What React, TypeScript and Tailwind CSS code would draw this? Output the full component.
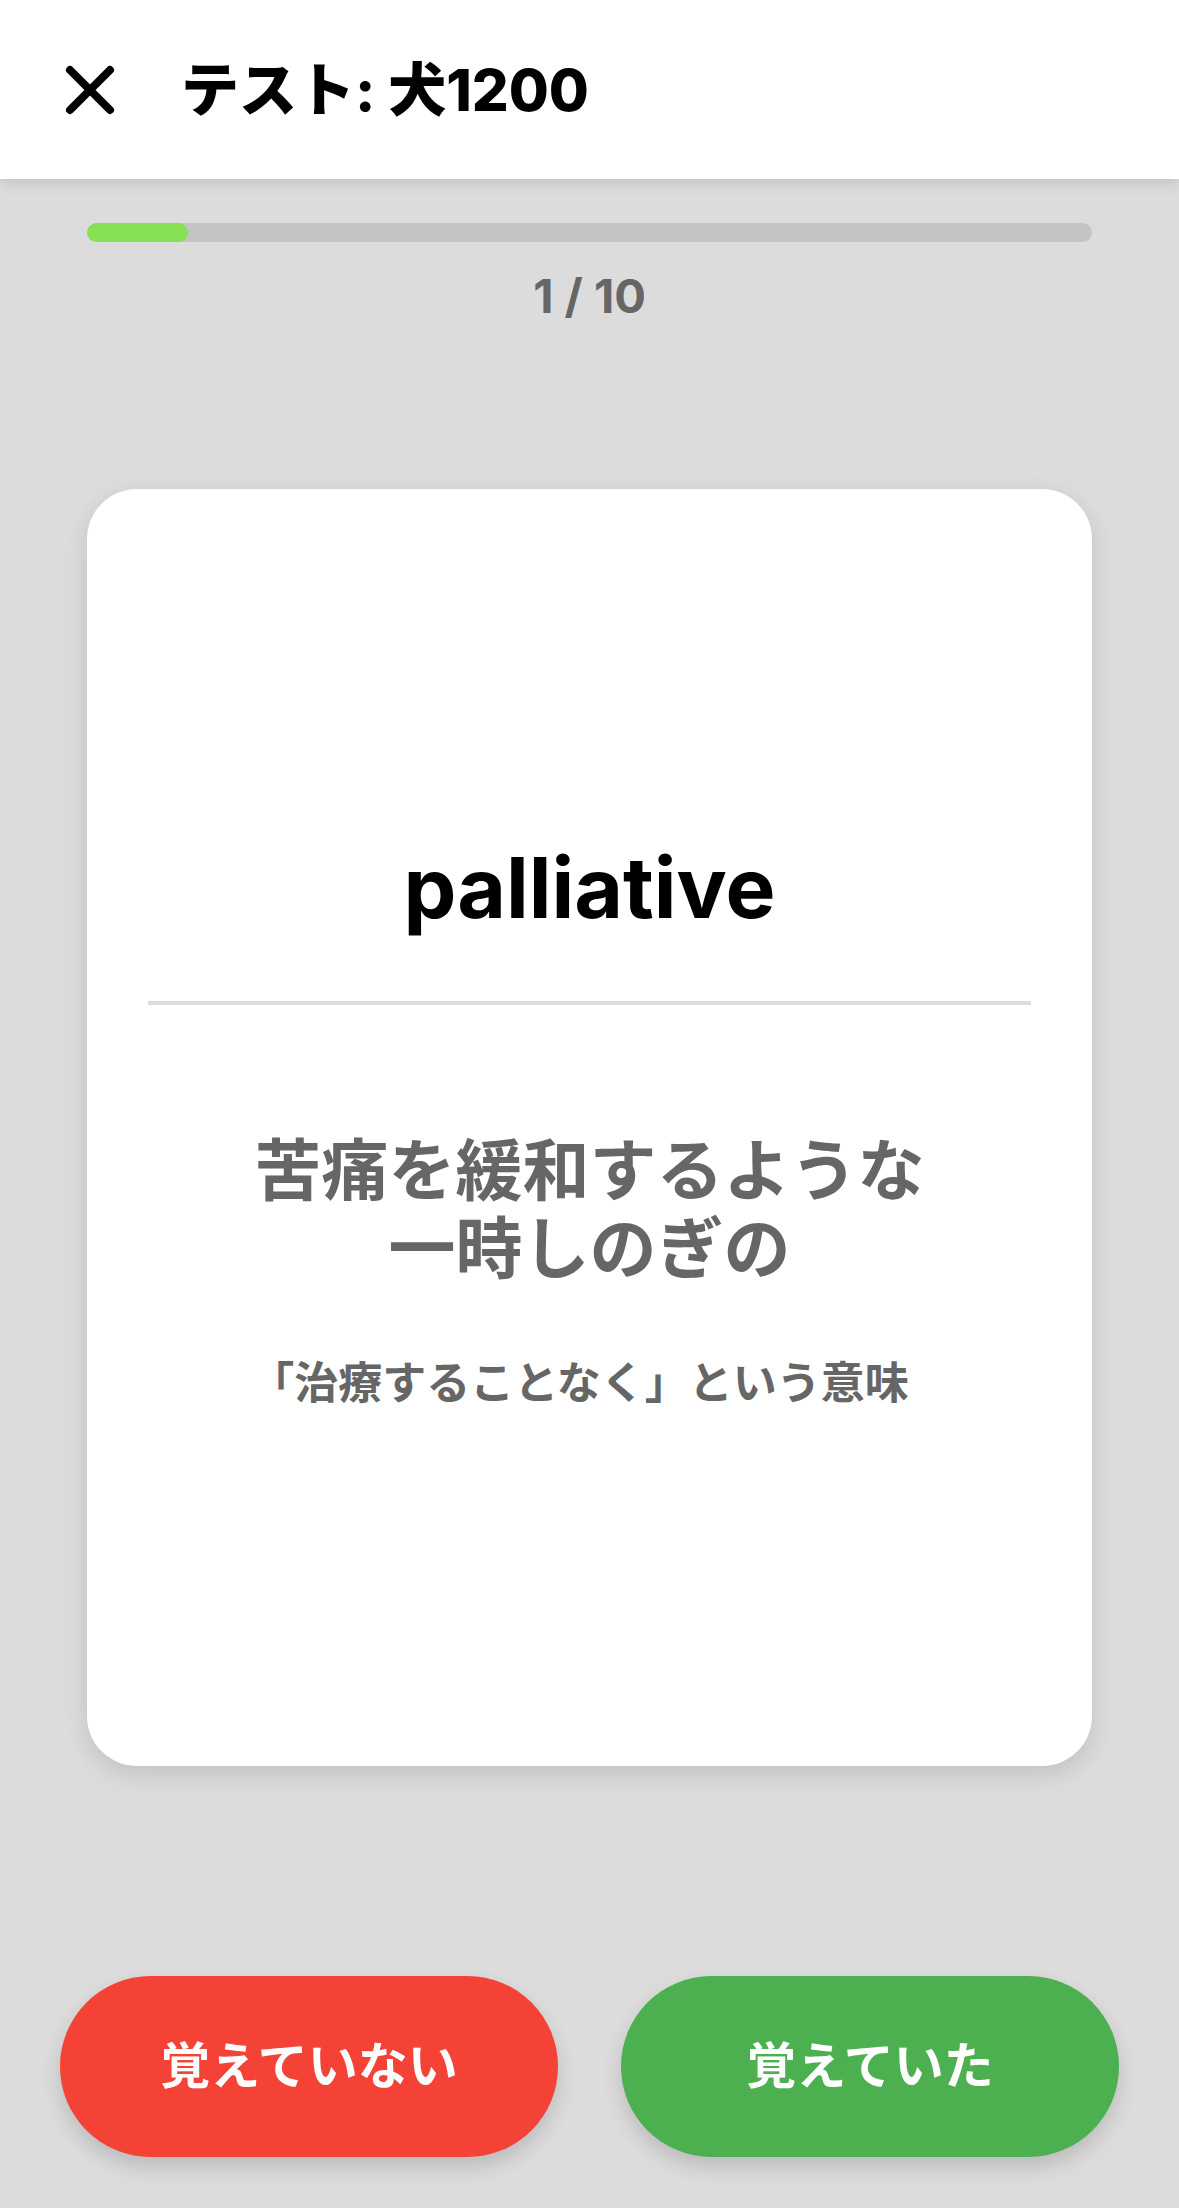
import React from 'react';

const font = { fontFamily: '"Inter", "Noto Sans CJK JP", sans-serif' };

const CloseIcon: React.FC = () => (
  <svg width="50" height="50" viewBox="0 0 50 50" fill="none">
    <path d="M5 5 L45 45 M45 5 L5 45" stroke="#000" strokeWidth="8" strokeLinecap="round" />
  </svg>
);

export default function App() {
  const current = 1;
  const total = 10;

  return (
    <div className="w-[1179px] h-[2208px] bg-[#dcdcdc] flex flex-col overflow-hidden" style={font}>
      {/* ヘッダー */}
      <header className="h-[179px] shrink-0 bg-white flex items-center px-[65px] shadow-[0_4px_14px_rgba(0,0,0,0.12)] relative z-10">
        <CloseIcon />
        <h1 className="ml-[66px] text-[58px] font-extrabold text-black leading-none">テスト: 犬1200</h1>
      </header>

      {/* 進捗 */}
      <div className="mt-[44px] mx-[87px] h-[19px] rounded-full bg-[#c4c4c4] overflow-hidden">
        <div className="h-full rounded-full bg-[#86e052]" style={{ width: `${(current / total) * 100}%` }} />
      </div>
      <p className="mt-[28px] h-[52px] leading-[52px] text-center text-[47px] font-bold text-[#666]">
        {current} / {total}
      </p>

      {/* カード */}
      <div className="mt-[167px] mx-[87px] h-[1277px] shrink-0 rounded-[50px] bg-white shadow-[0_8px_24px_rgba(0,0,0,0.12)] flex flex-col items-center pt-[349px]">
        <h2 className="text-[84px] leading-[99px] font-bold text-black">palliative</h2>
        <div className="mt-[64px] w-[883px] h-[4px] bg-[#dcdcdc]" />
        <div className="mt-[127px] text-center text-[67px] leading-[78px] font-bold text-[#666]">
          <div>苦痛を緩和するような</div>
          <div>一時しのぎの</div>
        </div>
        <p className="mt-[70px] text-center text-[44px] leading-[50px] font-bold text-[#666] -ml-[20px]">
          「治療することなく」という意味
        </p>
      </div>

      {/* ボタン */}
      <div className="mt-[210px] px-[60px] flex justify-between">
        <button className="w-[498px] h-[181px] rounded-full bg-[#f44336] text-white text-[50px] font-bold shadow-[0_10px_20px_rgba(0,0,0,0.15)]">
          覚えていない
        </button>
        <button className="w-[498px] h-[181px] rounded-full bg-[#4caf50] text-white text-[50px] font-bold shadow-[0_10px_20px_rgba(0,0,0,0.15)]">
          覚えていた
        </button>
      </div>
    </div>
  );
}
